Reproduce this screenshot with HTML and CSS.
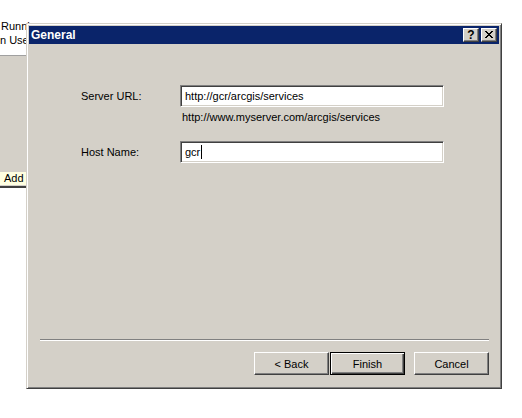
FILE: index.html
```html
<!DOCTYPE html>
<html>
<head>
<meta charset="utf-8">
<link rel="stylesheet" href="styles.css">
</head>
<body>
<div class="desktop">
  <div class="bgwin">
    <div class="bgwin-top">
      <div class="bg-line l1">Running</div>
      <div class="bg-line l2">n User</div>
    </div>
    <div class="bgwin-body">
      <div class="addbtn">Add</div>
    </div>
  </div>

  <div class="dialog">
    <div class="titlebar">
      <span class="title">General</span>
      <div class="tb help">?</div>
      <div class="tb close">
        <svg width="8" height="7" viewBox="0 0 8 7" shape-rendering="crispEdges">
          <path d="M0 0h2v1h-2z M6 0h2v1h-2z M1 1h2v1h-2z M5 1h2v1h-2z M2 2h4v1h-4z M3 3h2v1h-2z M2 4h4v1h-4z M1 5h2v1h-2z M5 5h2v1h-2z M0 6h2v1h-2z M6 6h2v1h-2z" fill="#000"/>
        </svg>
      </div>
    </div>
    <div class="body">
      <div class="form">
        <div class="row">
          <div class="label">Server URL:</div>
          <div class="input">http://gcr/arcgis/services</div>
        </div>
        <div class="hint">http://www.myserver.com/arcgis/services</div>
        <div class="row row-host">
          <div class="label">Host Name:</div>
          <div class="input">gcr<span class="caret"></span></div>
        </div>
      </div>
      <div class="spacer"></div>
      <div class="sep"></div>
      <div class="buttons">
        <div class="btn">&lt; Back</div>
        <div class="btn default">Finish</div>
        <div class="btn cancel">Cancel</div>
      </div>
    </div>
  </div>
</div>
</body>
</html>
```

FILE: styles.css
```css
html, body {
  margin: 0;
  padding: 0;
}
body {
  width: 522px;
  height: 418px;
  overflow: hidden;
  background: #ffffff;
  font-family: "Liberation Sans", Arial, sans-serif;
  font-size: 11px;
  color: #000;
}
.desktop {
  position: relative;
  width: 522px;
  height: 418px;
}

/* background window on the left */
.bgwin {
  position: absolute;
  left: 0;
  top: 0;
  width: 80px;
  display: flex;
  flex-direction: column;
}
.bgwin-top {
  height: 56px;
  box-sizing: border-box;
  padding-top: 19px;
  background: #ffffff;
  border-bottom: 1px solid #a0a0a0;
  overflow: hidden;
  white-space: nowrap;
}
.bg-line {
  line-height: 14px;
  height: 14px;
}
.l1 { padding-left: 1px; }
.bgwin-body {
  height: 132px;
  box-sizing: border-box;
  background: #d4d0c8;
  border-bottom: 2px solid #404040;
  display: flex;
  flex-direction: column;
  justify-content: flex-end;
  padding-bottom: 1px;
}
.addbtn {
  width: 26px;
  height: 13px;
  line-height: 13px;
  box-sizing: border-box;
  padding-left: 4px;
  background: #ffffe1;
}

/* dialog window */
.dialog {
  position: absolute;
  left: 26px;
  top: 23px;
  width: 476px;
  height: 366px;
  box-sizing: border-box;
  border: 1px solid;
  border-color: #d4d0c8 #404040 #404040 #d4d0c8;
  box-shadow: inset 1px 1px #ffffff, inset -1px -1px #808080;
  padding: 2px;
  background: #d4d0c8;
  display: flex;
  flex-direction: column;
}
.titlebar {
  height: 18px;
  flex: none;
  background: #0a246a;
  display: flex;
  align-items: center;
  padding: 0 2px;
  color: #ffffff;
}
.title {
  flex: 1;
  font-weight: bold;
  font-size: 12px;
  padding-left: 0;
}
.tb {
  width: 16px;
  height: 14px;
  box-sizing: border-box;
  border: 1px solid;
  border-color: #ffffff #404040 #404040 #ffffff;
  box-shadow: inset -1px -1px #808080;
  background: #d4d0c8;
  display: flex;
  align-items: center;
  justify-content: center;
  color: #000;
  font-weight: bold;
  font-size: 12px;
  line-height: 12px;
}
.tb svg { display: block; }
.help { margin-right: 2px; padding-bottom: 1px; }
.close { padding-right: 1px; padding-bottom: 1px; }

.body {
  flex: 1;
  display: flex;
  flex-direction: column;
}
.form {
  margin-top: 41px;
  padding-left: 52px;
  display: flex;
  flex-direction: column;
}
.row {
  display: flex;
  align-items: center;
}
.row-host { margin-top: 17px; }
.label {
  width: 99px;
  flex: none;
}
.input {
  width: 264px;
  height: 22px;
  box-sizing: border-box;
  border: 1px solid;
  border-color: #808080 #ffffff #ffffff #808080;
  box-shadow: inset 1px 1px #404040, inset -1px -1px #d4d0c8;
  background: #ffffff;
  padding: 0 3px 0 4px;
  display: flex;
  align-items: center;
  white-space: nowrap;
}
.caret {
  display: inline-block;
  width: 1px;
  height: 14px;
  background: #000;
  margin-left: 1px;
}
.hint {
  margin-top: 4px;
  margin-left: 101px;
  line-height: 13px;
}
.spacer { flex: 1; }
.sep {
  height: 0;
  margin: 0 10px 0 11px;
  border-top: 1px solid #808080;
  border-bottom: 1px solid #ffffff;
}
.buttons {
  display: flex;
  justify-content: flex-end;
  margin-top: 11px;
  padding: 0 10px 11px 0;
  gap: 1px;
}
.btn {
  width: 75px;
  height: 23px;
  box-sizing: border-box;
  border: 1px solid;
  border-color: #ffffff #404040 #404040 #ffffff;
  box-shadow: inset -1px -1px #808080;
  background: #d4d0c8;
  display: flex;
  align-items: center;
  justify-content: center;
}
.btn.default {
  border-color: #000000;
  box-shadow: inset 1px 1px #ffffff, inset -1px -1px #404040, inset -2px -2px #808080;
}
.btn.cancel { margin-left: 8px; }
```
